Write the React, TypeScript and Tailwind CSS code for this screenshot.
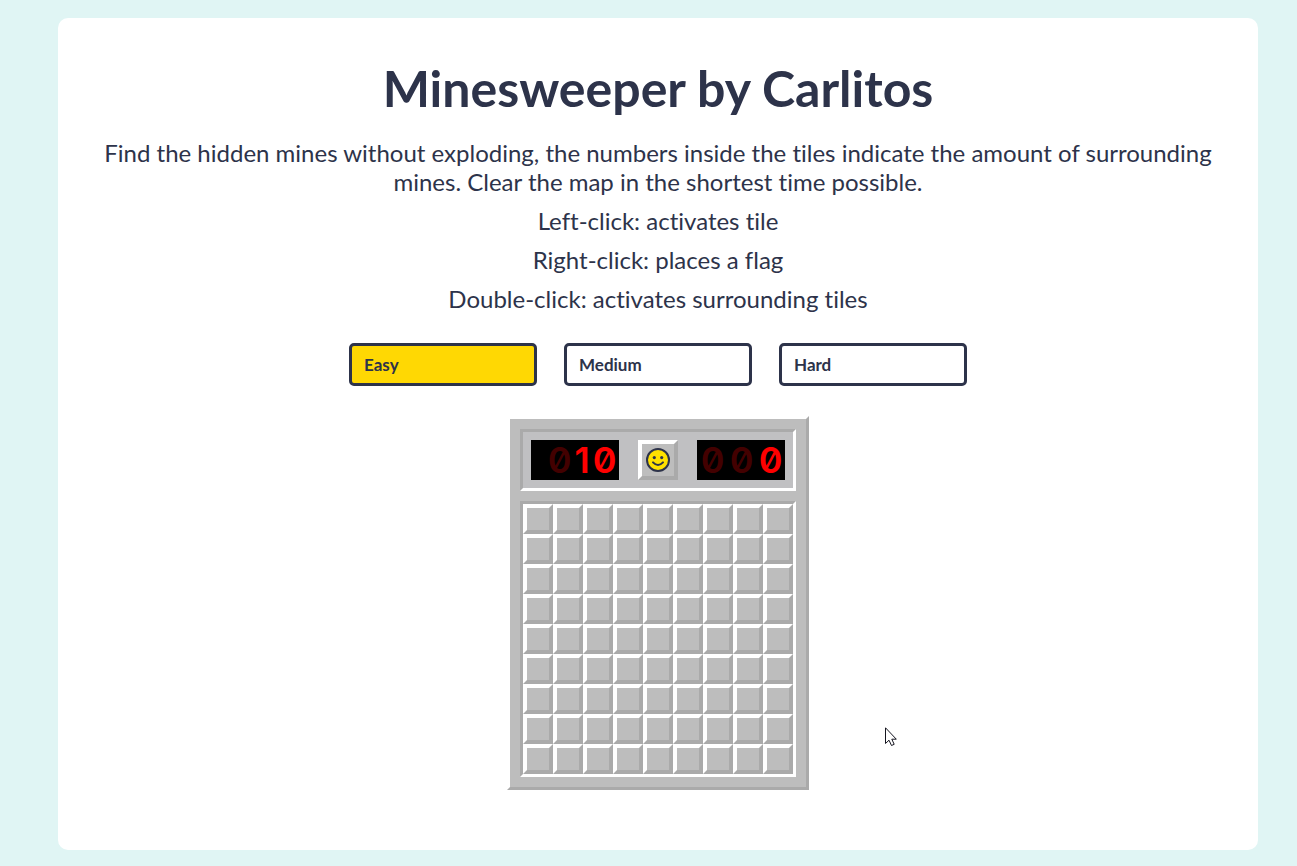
import { useState } from "react";

const levels = ["Easy", "Medium", "Hard"];

const hints = [
  "Left-click: activates tile",
  "Right-click: places a flag",
  "Double-click: activates surrounding tiles",
];

type Digit = { value: string; lit: boolean };

const mines: Digit[] = [
  { value: "0", lit: false },
  { value: "1", lit: true },
  { value: "0", lit: true },
];

const time: Digit[] = [
  { value: "0", lit: false },
  { value: "0", lit: false },
  { value: "0", lit: true },
];

const raised = "border-t-white border-l-white border-r-[#aaaaaa] border-b-[#aaaaaa]";
const sunken = "border-t-[#aaaaaa] border-l-[#aaaaaa] border-r-white border-b-white";

function Counter({ digits }: { digits: Digit[] }) {
  return (
    <div className="flex h-10 w-[88px] items-center justify-end bg-black font-['Inter',sans-serif] text-[36px] leading-10 font-semibold slashed-zero">
      {digits.map((d, i) => (
        <span
          key={i}
          className={`flex shrink-0 justify-center ${d.value === "1" ? "w-4" : "w-[29px]"} ${d.lit ? "text-[#ff0000]" : "text-[#430000]"}`}
        >
          {d.value}
        </span>
      ))}
    </div>
  );
}

function Face() {
  return (
    <svg viewBox="0 0 24 24" className="size-6" aria-hidden="true">
      <circle cx="12" cy="12" r="11" fill="#ffe100" stroke="#2d334a" strokeWidth="2" />
      <circle cx="8.3" cy="9.6" r="1.6" fill="#2d334a" />
      <circle cx="15.7" cy="9.6" r="1.6" fill="#2d334a" />
      <path d="M7 14.4 Q12 19.6 17 14.4" fill="none" stroke="#2d334a" strokeWidth="2" strokeLinecap="round" />
    </svg>
  );
}

export default function App() {
  const [level, setLevel] = useState("Easy");

  return (
    <div className="min-h-screen bg-[#e0f5f4] pt-[18px] pr-[39px] pb-4 pl-[58px] font-['Lato',sans-serif] text-[#2d334a]">
      <main className="flex flex-col items-center rounded-[10px] bg-white px-10 pt-10 pb-[60px]">
        <h1 className="text-center text-[50px] leading-[60px] font-bold">Minesweeper by Carlitos</h1>
        <div className="mt-5 flex flex-col gap-[10px] text-center text-[24px] leading-[29px] [font-variant-ligatures:none]">
          <p>
            Find the hidden mines without exploding, the numbers inside the tiles indicate the amount of
            surrounding mines. Clear the map in the shortest time possible.
          </p>
          {hints.map((h) => (
            <p key={h}>{h}</p>
          ))}
        </div>
        <div className="mt-[30px] flex gap-[27px]">
          {levels.map((name) => (
            <button
              key={name}
              type="button"
              aria-pressed={level === name}
              onClick={() => setLevel(name)}
              className={`h-[43px] w-[188px] rounded-[5px] border-[3px] border-[#2d334a] px-3 text-left text-[17px] leading-5 font-bold ${level === name ? "bg-[#ffd803]" : "bg-white"}`}
            >
              {name}
            </button>
          ))}
        </div>
        <section
          aria-label="Game board"
          className={`mt-[30px] flex flex-col gap-[10px] border-[3px] bg-[#bdbdbd] p-[10px] ${raised}`}
        >
          <div className={`flex items-center justify-between border-[3px] bg-[#c0c0c2] p-2 ${sunken}`}>
            <Counter digits={mines} />
            <button
              type="button"
              aria-label="New game"
              className={`flex size-10 items-center justify-center border-4 bg-[#bdbdbd] ${raised}`}
            >
              <Face />
            </button>
            <Counter digits={time} />
          </div>
          <div className={`grid grid-cols-9 border-[3px] ${sunken}`}>
            {Array.from({ length: 81 }, (_, i) => (
              <button
                key={i}
                type="button"
                aria-label={`Row ${Math.floor(i / 9) + 1}, column ${(i % 9) + 1}`}
                className={`size-[30px] border-4 bg-[#bdbdbd] ${raised}`}
              />
            ))}
          </div>
        </section>
      </main>
      <svg
        viewBox="0 0 12 20"
        className="pointer-events-none absolute top-[727px] left-[885px] h-5 w-3"
        aria-hidden="true"
      >
        <path
          d="M0.5 0.8V16.5L4 13.2L6.5 18.5L9.2 17.3L6.8 12.2H11.3Z"
          fill="#ffffff"
          stroke="#15151f"
          strokeWidth="1"
        />
      </svg>
    </div>
  );
}
